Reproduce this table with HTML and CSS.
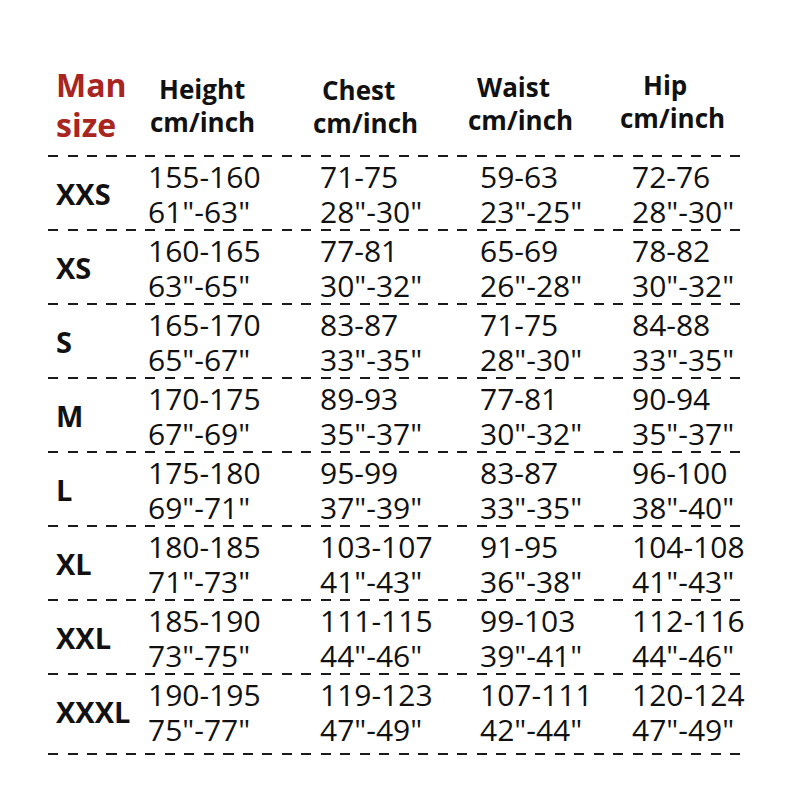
FILE: index.html
```html
<!DOCTYPE html>
<html lang="en">
<head>
<meta charset="utf-8">
<title>Man size chart</title>
<link rel="stylesheet" href="styles.css">
</head>
<body>
<div class="chart">
  <div class="head">
    <div class="title">Man<br>size</div>
    <div class="hcell h-height"><span class="hname">Height</span><span class="unit">cm/inch</span></div>
    <div class="hcell h-chest"><span class="hname">Chest</span><span class="unit">cm/inch</span></div>
    <div class="hcell h-waist"><span class="hname">Waist</span><span class="unit">cm/inch</span></div>
    <div class="hcell h-hip"><span class="hname hip">Hip</span><span class="unit">cm/inch</span></div>
  </div>
  <div class="rows">
    <div class="row"><div class="size">XXS</div><div class="val">155-160<br>61"-63"</div><div class="val">71-75<br>28"-30"</div><div class="val">59-63<br>23"-25"</div><div class="val">72-76<br>28"-30"</div></div>
    <div class="row"><div class="size">XS</div><div class="val">160-165<br>63"-65"</div><div class="val">77-81<br>30"-32"</div><div class="val">65-69<br>26"-28"</div><div class="val">78-82<br>30"-32"</div></div>
    <div class="row"><div class="size">S</div><div class="val">165-170<br>65"-67"</div><div class="val">83-87<br>33"-35"</div><div class="val">71-75<br>28"-30"</div><div class="val">84-88<br>33"-35"</div></div>
    <div class="row"><div class="size">M</div><div class="val">170-175<br>67"-69"</div><div class="val">89-93<br>35"-37"</div><div class="val">77-81<br>30"-32"</div><div class="val">90-94<br>35"-37"</div></div>
    <div class="row"><div class="size">L</div><div class="val">175-180<br>69"-71"</div><div class="val">95-99<br>37"-39"</div><div class="val">83-87<br>33"-35"</div><div class="val">96-100<br>38"-40"</div></div>
    <div class="row"><div class="size">XL</div><div class="val">180-185<br>71"-73"</div><div class="val">103-107<br>41"-43"</div><div class="val">91-95<br>36"-38"</div><div class="val">104-108<br>41"-43"</div></div>
    <div class="row"><div class="size">XXL</div><div class="val">185-190<br>73"-75"</div><div class="val">111-115<br>44"-46"</div><div class="val">99-103<br>39"-41"</div><div class="val">112-116<br>44"-46"</div></div>
    <div class="row last"><div class="size">XXXL</div><div class="val">190-195<br>75"-77"</div><div class="val">119-123<br>47"-49"</div><div class="val">107-111<br>42"-44"</div><div class="val">120-124<br>47"-49"</div></div>
  </div>
</div>
</body>
</html>
```
FILE: styles.css
```css
html, body {
  margin: 0;
  background: #ffffff;
}
.chart {
  padding: 65px 0 0 48px;
  width: 697px;
  font-family: "Open Sans", "Noto Sans", "DejaVu Sans", sans-serif;
  color: #111111;
}
.head {
  display: flex;
  align-items: flex-start;
  padding-left: 8px;
  height: 90px;
}
.title {
  width: 94px;
  font-size: 32px;
  line-height: 40px;
  font-weight: 700;
  color: #a8261f;
}
.hcell {
  display: flex;
  flex-direction: column;
  font-size: 26px;
  line-height: 33px;
  font-weight: 700;
}
.hname { margin-left: 9px; }
.hname.hip { margin-left: 23px; }
.h-height { width: 163px; margin-top: 8px; }
.h-chest { width: 155px; margin-top: 9px; }
.h-waist { width: 152px; margin-top: 6px; }
.h-hip { margin-top: 4px; }
.rows {
  display: flex;
  flex-direction: column;
}
.row {
  display: grid;
  grid-template-columns: 92px 172px 160px 152px 1fr;
  padding: 4px 0 0 8px;
  background-image: repeating-linear-gradient(90deg, #1a1a1a 0 10px, transparent 10px 19.5px);
  background-size: 100% 2px;
  background-repeat: no-repeat;
  background-position: 0 0;
}
.row.last {
  padding-bottom: 8px;
  background-image:
    repeating-linear-gradient(90deg, #1a1a1a 0 10px, transparent 10px 19.5px),
    repeating-linear-gradient(90deg, #1a1a1a 0 10px, transparent 10px 19.5px);
  background-size: 100% 2px, 100% 2px;
  background-position: 0 0, 0 100%;
}
.size {
  align-self: center;
  font-size: 29px;
  font-weight: 700;
  line-height: 36px;
}
.val {
  font-size: 30px;
  line-height: 35px;
  font-weight: 400;
  white-space: nowrap;
}
```
